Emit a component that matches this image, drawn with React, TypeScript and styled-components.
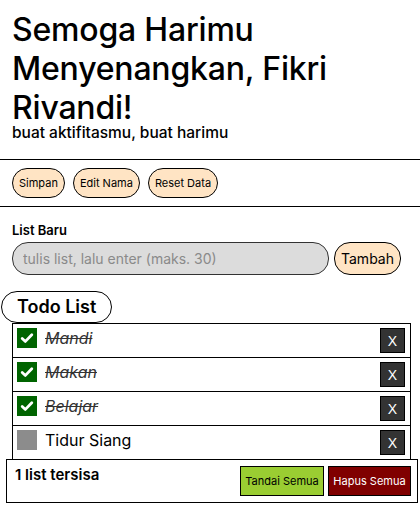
import styled, { createGlobalStyle } from 'styled-components';

/** global */
const GlobalStyle = createGlobalStyle`
	body {
		margin: 0;
		background: #ffffff;
		font-family: Inter, 'Noto Sans', sans-serif;
		color: #000000;
	}
`;

interface ITodo {
	id: number;
	title: string;
	done: boolean;
}

const todos: ITodo[] = [
	{ id: 1, title: 'Mandi', done: true },
	{ id: 2, title: 'Makan', done: true },
	{ id: 3, title: 'Belajar', done: true },
	{ id: 4, title: 'Tidur Siang', done: false },
];

/** style */
const Header = styled.header`
	padding: 10px 12px 17px;
	border-bottom: 1px solid #000;
`;

const Title = styled.h1`
	margin: 0;
	font-size: 32px;
	line-height: 39px;
	font-weight: 500;
	letter-spacing: -0.2px;
`;

const Subtitle = styled.p`
	margin: -3px 0 0;
	font-size: 15.5px;
	line-height: 18px;
	font-weight: 500;
`;

const Toolbar = styled.div`
	display: flex;
	gap: 8px;
	padding: 8px 12px;
	border-bottom: 1px solid #000;
`;

const PillButton = styled.button<{ $size?: number }>`
	height: 30px;
	padding: 0 6px;
	border: 1px solid #000;
	border-radius: 16px;
	background: #ffe4c4;
	color: #000;
	font-family: inherit;
	font-size: ${p => p.$size ?? 11}px;
	cursor: pointer;
`;

const FormSection = styled.section`
	padding: 15px 12px 0;
`;

const Label = styled.label`
	display: block;
	font-size: 13px;
	line-height: 16px;
	font-weight: 600;
	margin-bottom: 4px;
`;

const FormRow = styled.div`
	display: flex;
	gap: 5px;
`;

const TextInput = styled.input`
	width: 317px;
	height: 33px;
	box-sizing: border-box;
	padding: 0 10px;
	border: 1px solid #333;
	border-radius: 16px;
	background: #dcdcdc;
	font-family: inherit;
	font-size: 14px;
	outline: none;

	&::placeholder {
		color: #8a8a8a;
	}
`;

const AddButton = styled(PillButton)`
	height: 33px;
	padding: 0 6px;
`;

const TodoSection = styled.section`
	padding-top: 16px;
`;

const TodoHeading = styled.h2`
	display: inline-block;
	margin: 0 0 0 1px;
	height: 32px;
	box-sizing: border-box;
	padding: 0 15px;
	border: 1px solid #000;
	border-radius: 16px;
	font-size: 18px;
	line-height: 30px;
	font-weight: 600;
`;

const TodoList = styled.ul`
	list-style: none;
	margin: 0 9px 0 12px;
	padding: 0;
`;

const TodoRow = styled.li`
	display: flex;
	align-items: flex-start;
	gap: 8px;
	height: 35px;
	box-sizing: border-box;
	padding: 4px 5px 0 4px;
	border: 1px solid #000;
	margin-top: -1px;

	&:first-child {
		margin-top: 0;
	}
`;

const CheckBox = styled.span<{ $checked: boolean }>`
	display: flex;
	align-items: center;
	justify-content: center;
	flex: none;
	width: 20px;
	height: 20px;
	background: ${p => (p.$checked ? '#006400' : '#8c8c8c')};
`;

const TodoText = styled.span<{ $done: boolean }>`
	flex: 1;
	font-size: 16px;
	line-height: 20px;
	color: ${p => (p.$done ? '#333' : '#000')};
	font-style: ${p => (p.$done ? 'italic' : 'normal')};
	text-decoration: ${p => (p.$done ? 'line-through' : 'none')};
`;

const DeleteButton = styled.button`
	width: 25px;
	height: 25px;
	padding: 0;
	border: 1px solid #000;
	background: #333;
	color: #fff;
	font-family: 'Liberation Sans', sans-serif;
	font-size: 14px;
	cursor: pointer;
`;

const Footer = styled.div`
	display: flex;
	align-items: flex-start;
	margin: -1px 2px 0 6px;
	height: 44px;
	box-sizing: border-box;
	padding: 6px 6px 0 8px;
	border: 1px solid #000;
	position: relative;
	background: #fff;
`;

const Remaining = styled.span`
	flex: 1;
	font-size: 15px;
	line-height: 18px;
	font-weight: 600;
`;

const FooterButtons = styled.div`
	display: flex;
	gap: 4px;
`;

const BoxButton = styled.button<{ $bg: string; $fg: string; $w: number }>`
	width: ${p => p.$w}px;
	height: 30px;
	padding: 0;
	border: 1px solid #000;
	background: ${p => p.$bg};
	color: ${p => p.$fg};
	font-family: inherit;
	font-size: 11px;
	cursor: pointer;
`;

const CheckMark = () => (
	<svg width='14' height='14' viewBox='0 0 14 14'>
		<path d='M2.2 7.4 L5.4 10.4 L11.8 3.8' fill='none' stroke='#fff' strokeWidth='2.8' strokeLinecap='round' strokeLinejoin='round' />
	</svg>
);

/** Component */
const App = () => {
	const remaining = todos.filter(todo => !todo.done).length;

	return (
		<>
			<GlobalStyle />
			<Header>
				<Title>Semoga Harimu Menyenangkan, Fikri Rivandi!</Title>
				<Subtitle>buat aktifitasmu, buat harimu</Subtitle>
			</Header>

			<Toolbar>
				<PillButton>Simpan</PillButton>
				<PillButton>Edit Nama</PillButton>
				<PillButton>Reset Data</PillButton>
			</Toolbar>

			<FormSection>
				<Label htmlFor='newList'>List Baru</Label>
				<FormRow>
					<TextInput id='newList' placeholder='tulis list, lalu enter (maks. 30)' />
					<AddButton $size={14}>Tambah</AddButton>
				</FormRow>
			</FormSection>

			<TodoSection>
				<TodoHeading>Todo List</TodoHeading>
				<TodoList>
					{todos.map(todo => (
						<TodoRow key={todo.id}>
							<CheckBox $checked={todo.done}>{todo.done && <CheckMark />}</CheckBox>
							<TodoText $done={todo.done}>{todo.title}</TodoText>
							<DeleteButton>X</DeleteButton>
						</TodoRow>
					))}
				</TodoList>
				<Footer>
					<Remaining>{remaining} list tersisa</Remaining>
					<FooterButtons>
						<BoxButton $bg='#9acd32' $fg='#000' $w={84}>Tandai Semua</BoxButton>
						<BoxButton $bg='#800000' $fg='#fff' $w={83}>Hapus Semua</BoxButton>
					</FooterButtons>
				</Footer>
			</TodoSection>
		</>
	);
};

export default App;
